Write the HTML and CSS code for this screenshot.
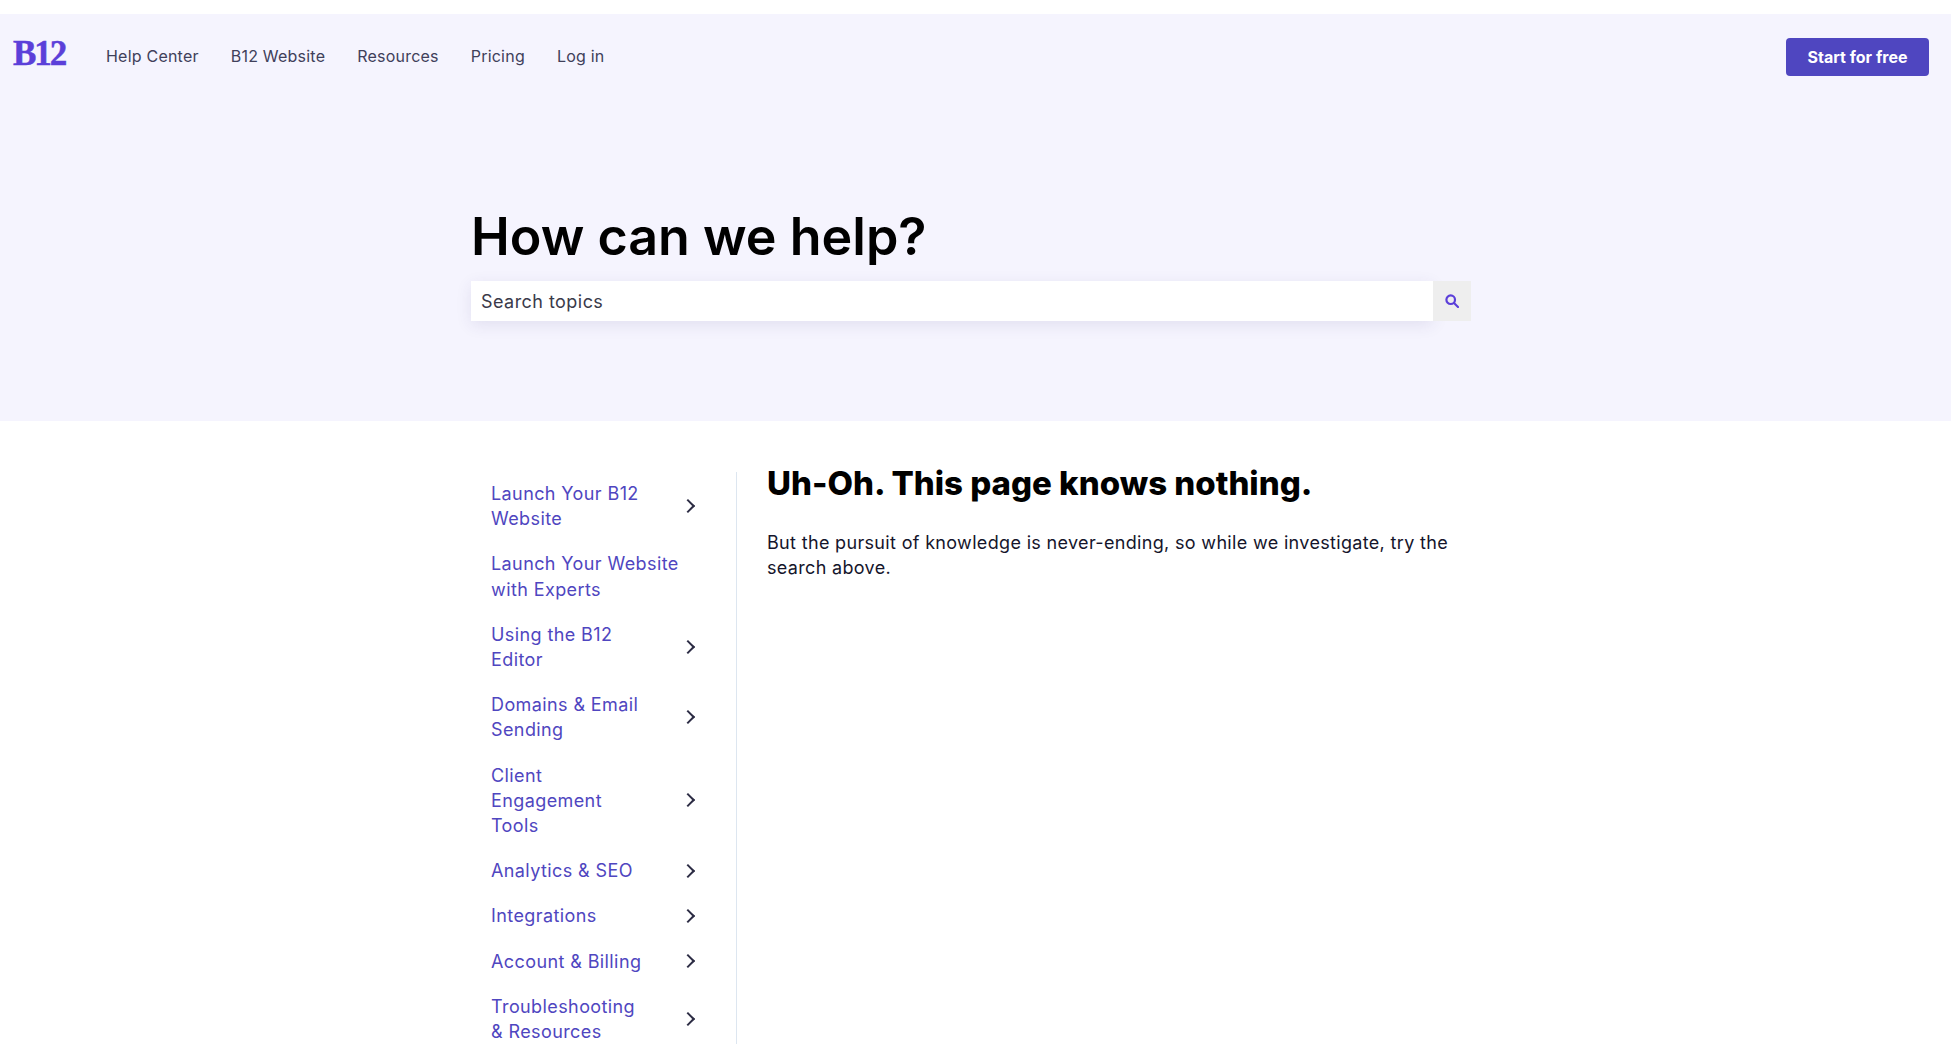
FILE: index.html
```html
<!DOCTYPE html>
<html lang="en">
  <head>
    <meta charset="UTF-8" />
    <meta name="viewport" content="width=device-width, initial-scale=1.0" />
    <title>B12 Help Center</title>
    <link rel="stylesheet" href="styles.css">
  </head>
  <body>
    <header class="hero">
      <nav class="topbar">
        <a class="logo" href="#">B12</a>
        <ul class="nav-links">
          <li><a href="#">Help Center</a></li>
          <li><a href="#">B12 Website</a></li>
          <li><a href="#">Resources</a></li>
          <li><a href="#">Pricing</a></li>
          <li><a href="#">Log in</a></li>
        </ul>
        <a class="start-btn" href="#">Start for free</a>
      </nav>
      <div class="hero-inner">
        <h1>How can we help?</h1>
        <form class="search">
          <input type="text" placeholder="Search topics" />
          <button type="button" aria-label="Search">
            <svg width="14" height="14" viewBox="0 0 14 14" fill="none" stroke="#5b3fd9">
              <circle cx="5.7" cy="5.7" r="4.3" stroke-width="2.2" />
              <path d="M9 9l4 4" stroke-width="2.2" stroke-linecap="round" />
            </svg>
          </button>
        </form>
      </div>
    </header>

    <div class="content">
      <aside class="sidebar">
        <ul>
          <li class="side-item"><a href="#">Launch Your B12<br />Website</a><span class="chev"></span></li>
          <li class="side-item"><a href="#">Launch Your Website<br />with Experts</a></li>
          <li class="side-item"><a href="#">Using the B12<br />Editor</a><span class="chev"></span></li>
          <li class="side-item"><a href="#">Domains &amp; Email<br />Sending</a><span class="chev"></span></li>
          <li class="side-item"><a href="#">Client<br />Engagement<br />Tools</a><span class="chev"></span></li>
          <li class="side-item"><a href="#">Analytics &amp; SEO</a><span class="chev"></span></li>
          <li class="side-item"><a href="#">Integrations</a><span class="chev"></span></li>
          <li class="side-item"><a href="#">Account &amp; Billing</a><span class="chev"></span></li>
          <li class="side-item"><a href="#">Troubleshooting<br />&amp; Resources</a><span class="chev"></span></li>
        </ul>
      </aside>
      <main class="article">
        <h2>Uh-Oh. This page knows nothing.</h2>
        <p>But the pursuit of knowledge is never-ending, so while we investigate, try the search above.</p>
      </main>
    </div>
  </body>
</html>
```

FILE: styles.css
```css
:root {
  --main-font: "Inter", "Noto Sans", sans-serif;
  --purple: #5b3fd9;
  --btn-color: #4f46c0;
  --hero-bg: #f5f4fe;
  --text-color: #15152b;
}

html {
  box-sizing: border-box;
  font-family: var(--main-font);
}

*,
*:before,
*:after {
  box-sizing: inherit;
}

body {
  margin: 0;
  height: 1044px;
  overflow: hidden;
  background: #fff;
  color: var(--text-color);
}

a {
  text-decoration: none;
  color: inherit;
}

ul {
  list-style: none;
  margin: 0;
  padding: 0;
}

.hero {
  margin-top: 14px;
  height: 407px;
  background: var(--hero-bg);
}

.topbar {
  display: flex;
  align-items: center;
  height: 48px;
  padding: 18px 22px 0 13px;
  box-sizing: content-box;
}

.logo {
  width: 53px;
  margin-top: -6px;
  font-family: "Liberation Serif", serif;
  font-weight: bold;
  font-size: 35px;
  line-height: 1;
  letter-spacing: -2px;
  -webkit-text-stroke: 0.5px var(--purple);
  color: var(--purple);
}

.nav-links {
  display: flex;
  gap: 32px;
  margin-left: 40px;
  font-size: 16px;
  letter-spacing: 0.22px;
  color: #40405a;
}

.start-btn {
  margin-left: auto;
  width: 143px;
  height: 38px;
  margin-top: 1px;
  display: flex;
  align-items: center;
  justify-content: center;
  background: var(--btn-color);
  border-radius: 4px;
  color: #fff;
  font-weight: 700;
  font-size: 16px;
}

.hero-inner {
  width: 1000px;
  margin: 0 0 0 471px;
  padding-top: 126px;
}

h1 {
  margin: 0 0 13px;
  font-size: 52px;
  line-height: 62px;
  font-weight: 600;
  color: #000;
}

.search {
  display: flex;
  height: 40px;
}

.search input {
  flex: 1;
  border: 0;
  padding: 0 10px;
  font-family: var(--main-font);
  font-size: 18px;
  letter-spacing: 0.45px;
  background: #fff;
  outline: none;
  box-shadow: 0 4px 16px rgba(60, 50, 120, 0.1);
}

.search input::placeholder {
  color: #3a3a4a;
  opacity: 1;
}

.search button {
  width: 38px;
  border: 0;
  padding: 0;
  background: #eeeeee;
  display: flex;
  align-items: center;
  justify-content: center;
}

.content {
  display: flex;
  margin-left: 471px;
  padding-top: 51px;
}

.sidebar {
  width: 266px;
  padding: 9px 0 0;
  border-right: 1px solid #dde6f0;
}

.side-item {
  display: flex;
  align-items: center;
  justify-content: space-between;
  padding: 0 45px 20px 20px;
  font-size: 18px;
  line-height: 25.2px;
  letter-spacing: 0.4px;
  color: var(--btn-color);
}

.chev {
  flex: none;
  width: 10px;
  height: 10px;
  margin-right: -2px;
  border-top: 2px solid #2c2c44;
  border-right: 2px solid #2c2c44;
  transform: rotate(45deg);
}

.article {
  width: 730px;
  padding-left: 30px;
}

.article h2 {
  margin: -1px 0 35px;
  font-size: 33px;
  line-height: 24px;
  font-weight: 800;
  color: #000;
}

.article p {
  margin: 0;
  font-size: 18px;
  line-height: 25.2px;
  letter-spacing: 0.33px;
}
```
